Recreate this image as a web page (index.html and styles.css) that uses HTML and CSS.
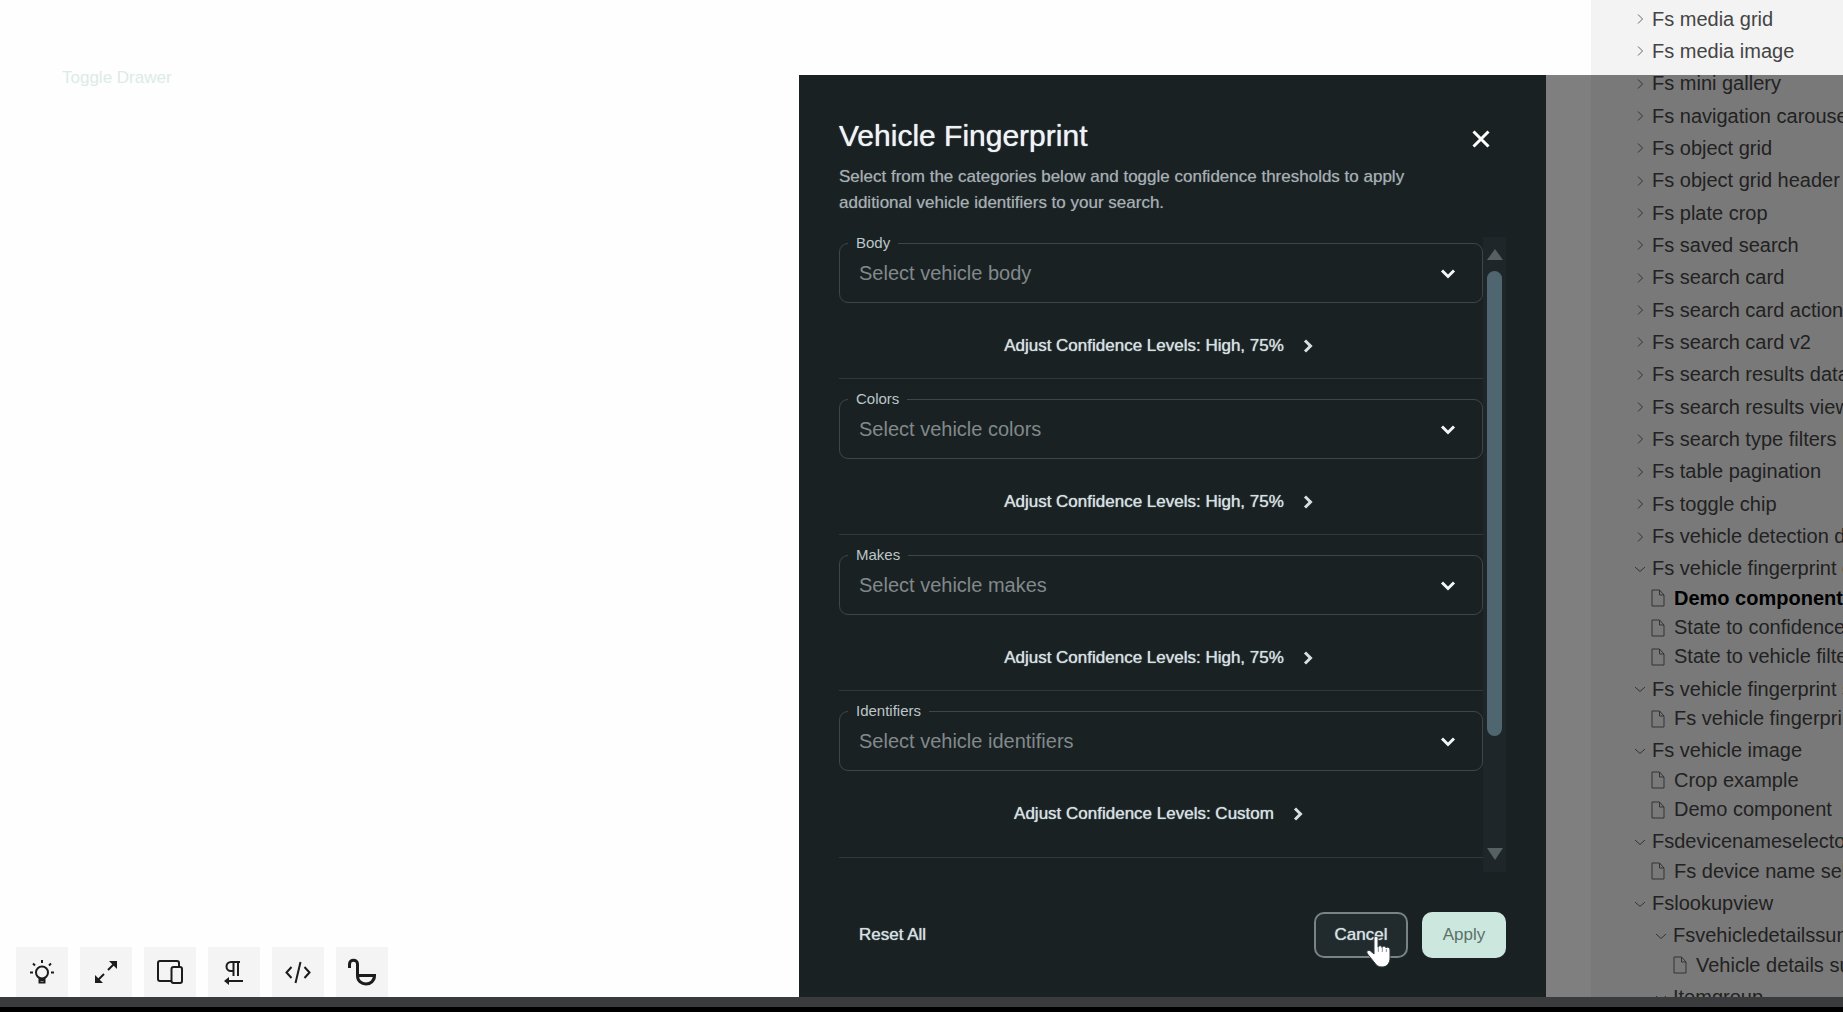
FILE: index.html
```
<!DOCTYPE html>
<html lang="en">
<head>
<meta charset="utf-8">
<title>Vehicle Fingerprint</title>
<link rel="stylesheet" href="styles.css">
</head>
<body>
<svg class="symbols" aria-hidden="true">
  <symbol id="right" viewBox="0 0 12 12"><path d="M4 1.5 8.5 6 4 10.5"/></symbol>
  <symbol id="down" viewBox="0 0 12 12"><path d="M1 4 6 8.5 11 4"/></symbol>
  <symbol id="file" viewBox="0 0 14 18"><path d="M1 1h7.500l4.500 5v11H1zM8.500 1v5H13"/></symbol>
  <symbol id="caret" viewBox="0 0 20 20"><path d="m4 7.500 6 6 6-6"/></symbol>
  <symbol id="next" viewBox="0 0 20 20"><path d="m7 4.500 5.500 5.500L7 15.500"/></symbol>
</svg>
<div class="workspace">
  <main class="stage">
    <button class="toggle" type="button">Toggle Drawer</button>
    <div class="toolbar">
      <button type="button" aria-label="Theme"><svg viewBox="0 0 28 28"><circle cx="14" cy="14.500" r="6"/><path d="M11.500 20v4.500h5V20M11.500 22h5M14 2v3M5 5.500l2 2M23 5.500l-2 2M2 14.500h3M23 14.500h3"/></svg></button>
      <button type="button" aria-label="Full screen"><svg viewBox="0 0 28 28"><path d="m16 12 8-8M12 16l-8 8"/><path class="solid" d="M17 3h8v8zM3 17v8h8z"/></svg></button>
      <button type="button" aria-label="Viewport"><svg viewBox="0 0 28 28"><path d="M15 23H4a2 2 0 0 1-2-2V5a2 2 0 0 1 2-2h17a2 2 0 0 1 2 2v4"/><rect x="15.500" y="9" width="10.500" height="16" rx="2"/></svg></button>
      <button type="button" aria-label="Text direction"><svg viewBox="0 0 28 28"><path d="M20 4h-9a4.500 4.500 0 0 0 0 9h2M13.500 4v14M18 4v14M6 23h17"/><path class="solid" d="M9 19v8l-5-4z"/></svg></button>
      <button type="button" aria-label="Code"><svg viewBox="0 0 28 28"><path d="m7.500 9-5 5.500 5 5.500M20.500 9l5 5.500-5 5.500M16.500 4l-5 21"/></svg></button>
      <button type="button" aria-label="Measure"><svg class="thick" viewBox="0 0 28 28"><path d="M1.500 10V6c0-5 8-5 8 0v11.500c0 11.500 17 11 17 0h-17"/></svg></button>
    </div>
  </main>
  <nav class="sidebar" aria-label="Components">
    <ul class="tree">
      <li><a href="#"><svg><use href="#right"/></svg>Fs media grid</a></li>
      <li><a href="#"><svg><use href="#right"/></svg>Fs media image</a></li>
      <li><a href="#"><svg><use href="#right"/></svg>Fs mini gallery</a></li>
      <li><a href="#"><svg><use href="#right"/></svg>Fs navigation carousel</a></li>
      <li><a href="#"><svg><use href="#right"/></svg>Fs object grid</a></li>
      <li><a href="#"><svg><use href="#right"/></svg>Fs object grid header</a></li>
      <li><a href="#"><svg><use href="#right"/></svg>Fs plate crop</a></li>
      <li><a href="#"><svg><use href="#right"/></svg>Fs saved search</a></li>
      <li><a href="#"><svg><use href="#right"/></svg>Fs search card</a></li>
      <li><a href="#"><svg><use href="#right"/></svg>Fs search card actions</a></li>
      <li><a href="#"><svg><use href="#right"/></svg>Fs search card v2</a></li>
      <li><a href="#"><svg><use href="#right"/></svg>Fs search results data</a></li>
      <li><a href="#"><svg><use href="#right"/></svg>Fs search results view</a></li>
      <li><a href="#"><svg><use href="#right"/></svg>Fs search type filters b</a></li>
      <li><a href="#"><svg><use href="#right"/></svg>Fs table pagination</a></li>
      <li><a href="#"><svg><use href="#right"/></svg>Fs toggle chip</a></li>
      <li><a href="#"><svg><use href="#right"/></svg>Fs vehicle detection d</a></li>
      <li><a href="#"><svg><use href="#down"/></svg>Fs vehicle fingerprint d</a></li>
      <li class="leaf"><a class="current" href="#"><svg><use href="#file"/></svg>Demo component</a></li>
      <li class="leaf"><a href="#"><svg><use href="#file"/></svg>State to confidence</a></li>
      <li class="leaf"><a href="#"><svg><use href="#file"/></svg>State to vehicle filter</a></li>
      <li><a href="#"><svg><use href="#down"/></svg>Fs vehicle fingerprint s</a></li>
      <li class="leaf"><a href="#"><svg><use href="#file"/></svg>Fs vehicle fingerprint</a></li>
      <li><a href="#"><svg><use href="#down"/></svg>Fs vehicle image</a></li>
      <li class="leaf"><a href="#"><svg><use href="#file"/></svg>Crop example</a></li>
      <li class="leaf"><a href="#"><svg><use href="#file"/></svg>Demo component</a></li>
      <li><a href="#"><svg><use href="#down"/></svg>Fsdevicenameselector</a></li>
      <li class="leaf"><a href="#"><svg><use href="#file"/></svg>Fs device name sel</a></li>
      <li><a href="#"><svg><use href="#down"/></svg>Fslookupview</a></li>
      <li class="nested"><a href="#"><svg><use href="#down"/></svg>Fsvehicledetailssum</a></li>
      <li class="leaf nested"><a href="#"><svg><use href="#file"/></svg>Vehicle details su</a></li>
      <li class="nested"><a href="#"><svg><use href="#down"/></svg>Itemgroup</a></li>
    </ul>
  </nav>
  <div class="overlay">
    <section class="drawer" role="dialog" aria-labelledby="drawer-title">
      <header class="drawer-head">
        <div class="title-row">
          <h1 id="drawer-title">Vehicle Fingerprint</h1>
          <button class="close" type="button" aria-label="Close"><svg viewBox="0 0 20 20"><path d="m2.500 2.500 15 15M17.500 2.500l-15 15"/></svg></button>
        </div>
        <p>Select from the categories below and toggle confidence thresholds to apply additional vehicle identifiers to your search.</p>
      </header>
      <div class="drawer-body">
        <div class="sections">
          <div class="section">
            <div class="field"><label for="body">Body</label><select id="body"><option>Select vehicle body</option></select><svg><use href="#caret"/></svg></div>
            <button class="adjust" type="button">Adjust Confidence Levels: High, 75%<svg><use href="#next"/></svg></button>
          </div>
          <div class="section">
            <div class="field"><label for="colors">Colors</label><select id="colors"><option>Select vehicle colors</option></select><svg><use href="#caret"/></svg></div>
            <button class="adjust" type="button">Adjust Confidence Levels: High, 75%<svg><use href="#next"/></svg></button>
          </div>
          <div class="section">
            <div class="field"><label for="makes">Makes</label><select id="makes"><option>Select vehicle makes</option></select><svg><use href="#caret"/></svg></div>
            <button class="adjust" type="button">Adjust Confidence Levels: High, 75%<svg><use href="#next"/></svg></button>
          </div>
          <div class="section">
            <div class="field"><label for="identifiers">Identifiers</label><select id="identifiers"><option>Select vehicle identifiers</option></select><svg><use href="#caret"/></svg></div>
            <button class="adjust" type="button">Adjust Confidence Levels: Custom<svg><use href="#next"/></svg></button>
          </div>
        </div>
        <div class="scrollbar" aria-hidden="true">
          <svg viewBox="0 0 16 12"><path d="M8 0 16 11H0z"/></svg>
          <div class="track"><div class="thumb"></div></div>
          <svg viewBox="0 0 16 12"><path d="M0 0h16L8 12z"/></svg>
        </div>
      </div>
      <footer class="drawer-foot">
        <button class="btn reset" type="button">Reset All</button>
        <button class="btn cancel" type="button">Cancel<svg class="pointer" viewBox="0 0 26 32"><path d="M8 2.500c0-3 4-3 4 0V11c1-2 4-1.500 4 .500 1-2 4-1.500 4 .500 1-1.500 4-1 4 2v8c0 5-3 9-8 9-4 0-6-2-8-5l-6.500-8c-2-3 1-4.500 3-3L8 18z"/><path class="gaps" d="M12.300 11v5M16.300 12v4M20.300 13v3"/></svg></button>
        <button class="btn apply" type="button">Apply</button>
      </footer>
    </section>
    <div class="backdrop"></div>
  </div>
</div>
<div class="window-edge"></div>
</body>
</html>
```
FILE: styles.css
```
* { box-sizing: border-box; }
body {
  margin: 0;
  height: 100vh;
  display: flex;
  flex-direction: column;
  overflow: hidden;
  background: #fefefe;
  font-family: "Liberation Sans", Arial, sans-serif;
}
button, select {
  margin: 0;
  padding: 0;
  border: 0;
  background: none;
  font-family: inherit;
}
svg { flex: none; fill: none; stroke: currentColor; stroke-width: 2; }
.symbols { display: none; }

.workspace {
  position: relative;
  flex: 1;
  min-height: 0;
  display: flex;
  overflow: hidden;
}
.window-edge {
  height: 15px;
  background: #3a3b3d;
  border-bottom: 5px solid #000;
}

/* Stage */
.stage {
  flex: 1;
  display: flex;
  flex-direction: column;
  justify-content: space-between;
  align-items: flex-start;
  padding: 66px 16px 0;
}
.toggle { margin-left: 46px; font-size: 17px; line-height: 24px; color: #dcebe7; }
.toolbar { display: flex; gap: 12px; }
.toolbar button {
  width: 52px;
  height: 50px;
  display: grid;
  place-items: center;
  background: #f4f4f4;
  color: #1c1c1c;
}
.toolbar svg { width: 28px; height: 28px; }
.toolbar .thick { stroke-width: 3; }
.solid { fill: currentColor; stroke: none; }

/* Component tree */
.sidebar { width: 252px; overflow: hidden; background: #f3f3f3; }
.tree {
  height: calc(100% + 17px);
  margin: 0;
  padding: 3px 0 0;
  list-style: none;
  display: flex;
  flex-direction: column;
  justify-content: space-between;
}
.tree a {
  height: 32px;
  display: flex;
  align-items: center;
  gap: 6px;
  padding-left: 43px;
  font-size: 20px;
  color: #444;
  text-decoration: none;
  white-space: nowrap;
}
.tree svg { width: 12px; height: 12px; color: #666; stroke-width: 1; }
.tree .leaf { margin-top: -3px; }
.tree .leaf a { gap: 9px; padding-left: 60px; }
.tree .leaf svg { width: 14px; height: 18px; }
.tree .nested a { padding-left: 64px; }
.tree .leaf.nested a { padding-left: 82px; }
.tree .current { font-weight: bold; color: #000; }

/* Drawer */
.overlay {
  position: absolute;
  top: 75px;
  right: 0;
  bottom: 0;
  display: flex;
}
.backdrop { width: 297px; background: rgba(0, 0, 0, 0.5); }
.drawer {
  width: min(747px, 70vw);
  display: flex;
  flex-direction: column;
  padding: 43px 40px 39px;
  background: #1a2123;
  color: #d5dddf;
}
.title-row { display: flex; justify-content: space-between; align-items: center; }
h1 {
  margin: 0;
  font-size: 30px;
  line-height: 36px;
  font-weight: normal;
  color: #eef3f5;
  text-shadow: 0 0 1px #eef3f5;
}
.close { width: 50px; height: 36px; display: grid; place-items: center; padding-top: 6px; color: #fff; }
.close svg { width: 20px; height: 20px; stroke-width: 3; }
.drawer-head p {
  margin: 10px 0 21px;
  padding-right: 60px;
  font-size: 17px;
  line-height: 26px;
  color: #a6b0b3;
  text-shadow: 0 0 1px #6a7478;
}
.drawer-body { flex: 1; min-height: 0; display: flex; }
.sections { flex: 1; padding-top: 6px; overflow: hidden; }
.section {
  display: flex;
  flex-direction: column;
  margin-bottom: 20px;
  padding-bottom: 14px;
  border-bottom: 1px solid #30383b;
}
.section:last-child { padding-bottom: 25px; }
.field {
  position: relative;
  height: 60px;
  display: grid;
  align-items: center;
  border: 1px solid #3d4649;
  border-radius: 9px;
}
.field label {
  position: absolute;
  top: -10px;
  left: 8px;
  padding: 0 8px;
  background: #1a2123;
  font-size: 15px;
  line-height: 18px;
  color: #bcc6c8;
}
.field select {
  grid-area: 1 / 1;
  height: 58px;
  padding-left: 19px;
  appearance: none;
  font-size: 20px;
  color: #81898b;
}
.field svg {
  grid-area: 1 / 1;
  justify-self: end;
  margin-right: 24px;
  width: 20px;
  height: 20px;
  stroke-width: 3;
  color: #f2f6f7;
  pointer-events: none;
}
.adjust {
  align-self: center;
  display: flex;
  align-items: center;
  gap: 14px;
  height: 36px;
  margin-top: 25px;
  font-size: 17px;
  color: #d5e0e1;
  text-shadow: 0 0 1px #d5e0e1;
}
.adjust svg { width: 20px; height: 20px; stroke-width: 3; }
.scrollbar {
  width: 23px;
  display: flex;
  flex-direction: column;
  align-items: center;
  gap: 10px;
  padding: 12px 0;
  background: #1f2629;
}
.scrollbar svg { width: 16px; height: 12px; fill: #566063; stroke: none; }
.track { flex: 1; width: 15px; }
.thumb { height: 82%; border-radius: 8px; background: #4f6670; }
.drawer-foot { display: flex; align-items: center; gap: 14px; margin-top: 40px; }
.btn {
  position: relative;
  height: 46px;
  border-radius: 10px;
  font-size: 17px;
  color: #d5e0e1;
}
.reset { margin-right: auto; padding: 0 20px; text-shadow: 0 0 1px #d5e0e1; }
.cancel {
  width: 94px;
  border: 2px solid #798285;
  background: #212b2e;
  text-shadow: 0 0 1px #d5e0e1;
}
.apply { width: 84px; background: #cce8de; color: #5b716a; }
.pointer {
  position: absolute;
  left: 50px;
  top: 22px;
  width: 26px;
  height: 32px;
  fill: #fff;
  stroke: #30383b;
  stroke-width: 1;
}
.gaps { stroke: #8a9194; }
```
